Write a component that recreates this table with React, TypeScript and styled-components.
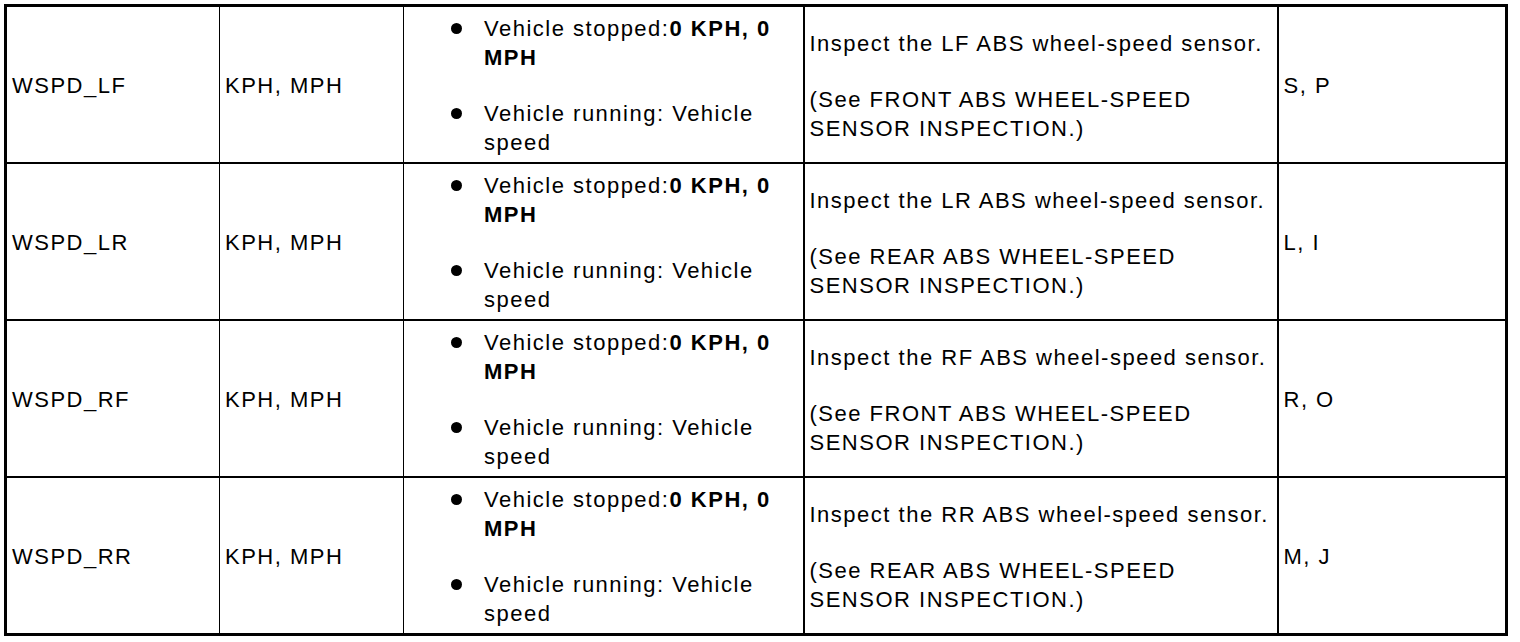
import styled, { createGlobalStyle } from "styled-components";

const GlobalStyle = createGlobalStyle`
  body {
    margin: 0;
    background: #fff;
    color: #000;
    font-family: "Liberation Sans", Arial, sans-serif;
  }
`;

const Page = styled.div`
  padding: 4px;
`;

const Table = styled.table`
  width: 1501px;
  border-collapse: collapse;
  table-layout: fixed;
  border: 3px solid #000;
  font-size: 22px;
  line-height: 29px;
  letter-spacing: 1.5px;
`;

const Row = styled.tr`
  border-bottom: 2px solid #000;
  &:last-child {
    border-bottom: 3px solid #000;
  }
`;

const Cell = styled.td<{ $rule?: number }>`
  padding: 7px 3px 5px 5px;
  vertical-align: middle;
  border-right: ${(p) => p.$rule ?? 1}px solid #000;
  &:last-child {
    border-right: 3px solid #000;
  }
`;

const Para = styled.p`
  margin: 0;
  & + & {
    margin-top: 27px;
  }
`;

const Bullets = styled.ul`
  list-style: none;
  margin: 0;
  padding: 0 0 0 75px;
`;

const Bullet = styled.li`
  position: relative;
  & + & {
    margin-top: 27px;
  }
  &::before {
    content: "";
    position: absolute;
    left: -33px;
    top: 9px;
    width: 11px;
    height: 11px;
    border-radius: 50%;
    background: #000;
  }
`;

const rows = [
  { id: "WSPD_LF", corner: "LF", section: "FRONT", pins: "S, P" },
  { id: "WSPD_LR", corner: "LR", section: "REAR", pins: "L, I" },
  { id: "WSPD_RF", corner: "RF", section: "FRONT", pins: "R, O" },
  { id: "WSPD_RR", corner: "RR", section: "REAR", pins: "M, J" },
];

export default function App() {
  return (
    <Page>
      <GlobalStyle />
      <Table>
        <colgroup>
          <col style={{ width: 214 }} />
          <col style={{ width: 184 }} />
          <col style={{ width: 400 }} />
          <col style={{ width: 474 }} />
          <col style={{ width: 229 }} />
        </colgroup>
        <tbody>
          {rows.map((r) => (
            <Row key={r.id}>
              <Cell>{r.id}</Cell>
              <Cell>KPH, MPH</Cell>
              <Cell $rule={2}>
                <Bullets>
                  <Bullet>
                    Vehicle stopped:<b>0 KPH, 0 MPH</b>
                  </Bullet>
                  <Bullet>Vehicle running: Vehicle speed</Bullet>
                </Bullets>
              </Cell>
              <Cell $rule={2}>
                <Para>Inspect the {r.corner} ABS wheel-speed sensor.</Para>
                <Para>
                  (See {r.section} ABS WHEEL-SPEED SENSOR INSPECTION.)
                </Para>
              </Cell>
              <Cell>{r.pins}</Cell>
            </Row>
          ))}
        </tbody>
      </Table>
    </Page>
  );
}
